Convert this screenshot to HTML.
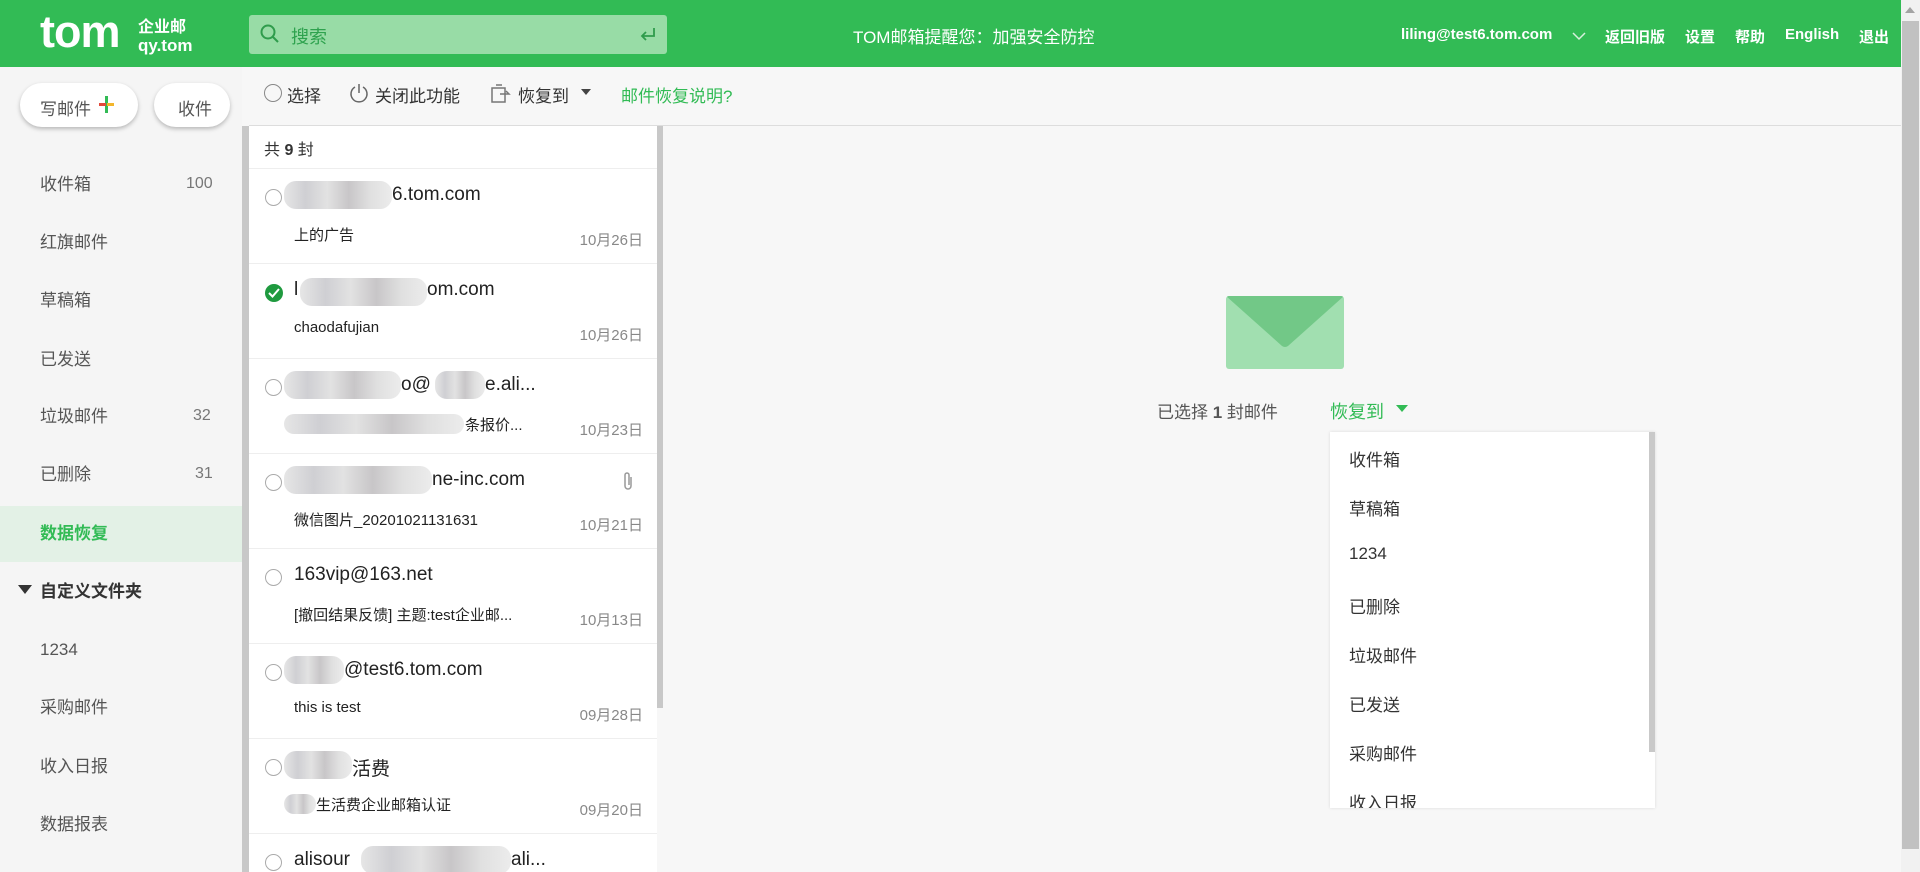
<!DOCTYPE html>
<html><head><meta charset="utf-8"><style>
*{margin:0;padding:0;box-sizing:border-box}
html,body{width:1920px;height:872px;overflow:hidden}
body{background:#f7f7f7;font-family:"Liberation Sans","Noto Sans CJK SC",sans-serif;color:#333}
#root{position:relative;width:1920px;height:872px;overflow:hidden}
.a{position:absolute;white-space:nowrap}
.hdr{left:0;top:0;width:1901px;height:67px;background:#32bb55}
.w{color:#fff}
.nav{left:40px;font-size:17px;color:#555;line-height:20px}
.cnt{font-size:16px;color:#777}
.item{left:249px;width:408px;height:95px;border-bottom:1px solid #eee;background:#fff}
.snd{font-size:19px;color:#222;left:45px;top:15px}
.sub{font-size:15px;color:#222;left:45px;top:55px}
.dt{font-size:15px;color:#888;right:14px;top:60px}
.rad{left:16px;top:20px;width:17px;height:17px;border:1.5px solid #aaa;border-radius:50%}
.blur{height:28px;border-radius:12px;background:linear-gradient(90deg,#e6e6e6,#cfcfd3 20%,#e2e2e2 40%,#c8c6c8 60%,#e0e0e0 80%,#ececec)}
.dd{font-size:17px;color:#333;left:1349px}
</style></head><body><div id="root">
<div class="a hdr"></div>
<div class="a w" style="left:40px;top:6px;font-size:45px;font-weight:bold;letter-spacing:-1px">tom</div>
<div class="a w" style="left:138px;top:13px;font-size:16px;font-weight:bold">企业邮</div>
<div class="a w" style="left:138px;top:36px;font-size:17px;font-weight:bold">qy.tom</div>
<div class="a" style="left:249px;top:15px;width:418px;height:39px;background:#98dca6;border-radius:3px"></div>
<svg class="a" style="left:259px;top:23px" width="22" height="22" viewBox="0 0 22 22"><circle cx="9" cy="9" r="6.5" fill="none" stroke="#2f9c4c" stroke-width="2"/><path d="M14 14l5 5" stroke="#2f9c4c" stroke-width="2"/></svg>
<div class="a" style="left:291px;top:23px;font-size:18px;color:#2ea24e">搜索</div>
<svg class="a" style="left:638px;top:25px" width="20" height="20" viewBox="0 0 20 20"><path d="M16 3v8H4M8 7l-4 4 4 4" fill="none" stroke="#2f9c4c" stroke-width="1.8"/></svg>
<div class="a w" style="left:853px;top:23px;font-size:17px">TOM邮箱提醒您：加强安全防控</div>
<div class="a w" style="left:1401px;top:26px;font-size:15px;font-weight:bold">liling@test6.tom.com</div>
<svg class="a" style="left:1572px;top:31px" width="14" height="10"><path d="M1 2l6 6 6-6" fill="none" stroke="#d8f0dd" stroke-width="1.5"/></svg>
<div class="a w" style="left:1605px;top:26px;font-size:15px;font-weight:bold">返回旧版</div>
<div class="a w" style="left:1685px;top:26px;font-size:15px;font-weight:bold">设置</div>
<div class="a w" style="left:1735px;top:26px;font-size:15px;font-weight:bold">帮助</div>
<div class="a w" style="left:1785px;top:26px;font-size:15px;font-weight:bold">English</div>
<div class="a w" style="left:1859px;top:26px;font-size:15px;font-weight:bold">退出</div>
<div class="a" style="left:1901px;top:0;width:19px;height:872px;background:#f1f1f1"></div>
<div class="a" style="left:1902px;top:21px;width:17px;height:828px;background:#c1c1c1"></div>
<svg class="a" style="left:1904px;top:6px" width="12" height="8"><path d="M1 7l5-6 5 6z" fill="#a3a3a3"/></svg>
<div class="a" style="left:0;top:67px;width:242px;height:805px;background:#f5f5f5"></div>
<div class="a" style="left:242px;top:126px;width:7px;height:746px;background:#c8c8c8"></div>
<div class="a" style="left:20px;top:83px;width:118px;height:44px;background:#fff;border-radius:22px;box-shadow:0 2px 4px rgba(0,0,0,.25)"></div>
<div class="a" style="left:40px;top:95px;font-size:17px;color:#555">写邮件</div>
<div class="a" style="left:105px;top:96px;width:3px;height:17px;background:#32bb55"></div>
<div class="a" style="left:99px;top:103px;width:7px;height:3px;background:#e24a3b"></div>
<div class="a" style="left:107px;top:103px;width:7px;height:3px;background:#f3b62b"></div>
<div class="a" style="left:154px;top:83px;width:76px;height:44px;background:#fff;border-radius:22px;box-shadow:0 2px 4px rgba(0,0,0,.25)"></div>
<div class="a" style="left:178px;top:95px;font-size:17px;color:#555">收件</div>
<div class="a nav" style="top:175px">收件箱</div><div class="a cnt" style="left:186px;top:175px">100</div>
<div class="a nav" style="top:233px">红旗邮件</div>
<div class="a nav" style="top:291px">草稿箱</div>
<div class="a nav" style="top:350px">已发送</div>
<div class="a nav" style="top:407px">垃圾邮件</div><div class="a cnt" style="left:193px;top:407px">32</div>
<div class="a nav" style="top:465px">已删除</div><div class="a cnt" style="left:195px;top:465px">31</div>
<div class="a" style="left:0;top:506px;width:242px;height:56px;background:#e3f1e6"></div>
<div class="a nav" style="top:524px;color:#32bb55;font-weight:bold">数据恢复</div>
<svg class="a" style="left:18px;top:585px" width="14" height="10"><path d="M0 0h14L7 9z" fill="#333"/></svg>
<div class="a nav" style="top:582px;color:#333;font-weight:bold">自定义文件夹</div>
<div class="a nav" style="top:640px">1234</div>
<div class="a nav" style="top:698px">采购邮件</div>
<div class="a nav" style="top:757px">收入日报</div>
<div class="a nav" style="top:815px">数据报表</div>
<div class="a" style="left:249px;top:125px;width:1652px;height:1px;background:#ddd"></div>
<div class="a" style="left:264px;top:84px;width:18px;height:18px;border:1.5px solid #888;border-radius:50%"></div>
<div class="a" style="left:287px;top:82px;font-size:17px;color:#333">选择</div>
<svg class="a" style="left:349px;top:82px" width="20" height="22"><path d="M6 5a8 8 0 1 0 8 0" fill="none" stroke="#666" stroke-width="1.5"/><path d="M10 2v9" stroke="#666" stroke-width="1.5"/></svg>
<div class="a" style="left:375px;top:82px;font-size:17px;color:#333">关闭此功能</div>
<svg class="a" style="left:490px;top:82px" width="22" height="22"><rect x="2" y="6" width="13" height="14" fill="none" stroke="#777" stroke-width="1.5"/><path d="M6 3h6M10 12h9l-3-3" fill="none" stroke="#777" stroke-width="1.5"/></svg>
<div class="a" style="left:518px;top:82px;font-size:17px;color:#333">恢复到</div>
<svg class="a" style="left:581px;top:89px" width="10" height="6"><path d="M0 0h10L5 6z" fill="#444"/></svg>
<div class="a" style="left:621px;top:82px;font-size:17px;color:#32bb55">邮件恢复说明?</div>
<div class="a" style="left:249px;top:126px;width:408px;height:746px;background:#fff"></div>
<div class="a" style="left:657px;top:126px;width:6px;height:582px;background:#c8c8c8"></div>
<div class="a" style="left:264px;top:136px;font-size:16px;color:#333">共 <b>9</b> 封</div>
<div class="a" style="left:249px;top:168px;width:408px;height:1px;background:#eee"></div>

<div class="a item" style="top:169px"><div class="a rad"></div><div class="a blur" style="left:35px;top:12px;width:108px"></div><div class="a snd" style="left:143px">6.tom.com</div><div class="a sub">上的广告</div><div class="a dt">10月26日</div></div>
<div class="a item" style="top:264px"><div class="a" style="left:16px;top:20px;width:18px;height:18px;border-radius:50%;background:#1f9a3f"></div><svg class="a" style="left:19px;top:24px" width="12" height="10"><path d="M1 5l3.5 3.5L11 1" fill="none" stroke="#fff" stroke-width="2"/></svg><div class="a snd">l</div><div class="a blur" style="left:51px;top:14px;width:127px"></div><div class="a snd" style="left:178px">om.com</div><div class="a sub">chaodafujian</div><div class="a dt">10月26日</div></div>
<div class="a item" style="top:359px"><div class="a rad"></div><div class="a blur" style="left:35px;top:12px;width:117px"></div><div class="a snd" style="left:152px">o@</div><div class="a blur" style="left:186px;top:12px;width:50px"></div><div class="a snd" style="left:236px">e.ali...</div><div class="a blur" style="left:35px;top:55px;width:180px;height:20px"></div><div class="a sub" style="left:216px">条报价...</div><div class="a dt">10月23日</div></div>
<div class="a item" style="top:454px"><div class="a rad"></div><div class="a blur" style="left:35px;top:12px;width:148px"></div><div class="a snd" style="left:183px">ne-inc.com</div><svg class="a" style="left:374px;top:17px" width="12" height="20"><path d="M8 6v9a3 3 0 0 1-6 0V4a2 2 0 0 1 4 0v10" fill="none" stroke="#999" stroke-width="1.5"/></svg><div class="a sub">微信图片_20201021131631</div><div class="a dt">10月21日</div></div>
<div class="a item" style="top:549px"><div class="a rad"></div><div class="a snd">163vip@163.net</div><div class="a sub">[撤回结果反馈] 主题:test企业邮...</div><div class="a dt">10月13日</div></div>
<div class="a item" style="top:644px"><div class="a rad"></div><div class="a blur" style="left:35px;top:12px;width:60px"></div><div class="a snd" style="left:95px">@test6.tom.com</div><div class="a sub">this is test</div><div class="a dt">09月28日</div></div>
<div class="a item" style="top:739px"><div class="a rad"></div><div class="a blur" style="left:35px;top:12px;width:68px"></div><div class="a snd" style="left:103px">活费</div><div class="a blur" style="left:35px;top:55px;width:32px;height:20px"></div><div class="a sub" style="left:67px">生活费企业邮箱认证</div><div class="a dt">09月20日</div></div>
<div class="a item" style="top:834px;height:38px;overflow:hidden;border-bottom:none"><div class="a rad"></div><div class="a snd">alisour</div><div class="a blur" style="left:112px;top:12px;width:150px"></div><div class="a snd" style="left:262px">ali...</div></div>
<div class="a" style="left:1226px;top:296px;width:118px;height:73px;background:#a1dfb0;border-radius:3px;overflow:hidden"><svg width="118" height="73"><path d="M0 0h118L62 50q-3 2-6 0z" fill="#72c887"/></svg></div>
<div class="a" style="left:1157px;top:398px;font-size:17px;color:#555">已选择 <b>1</b> 封邮件</div>
<div class="a" style="left:1330px;top:398px;font-size:18px;color:#32bb55">恢复到</div>
<svg class="a" style="left:1396px;top:405px" width="12" height="7"><path d="M0 0h12L6 7z" fill="#32bb55"/></svg>
<div class="a" style="left:1330px;top:432px;width:325px;height:376px;background:#fff;box-shadow:0 0 3px rgba(0,0,0,.12);overflow:hidden">
<div class="a" style="left:319px;top:0;width:6px;height:320px;background:#c9c9c9"></div>
</div>
<div class="a dd" style="top:446px">收件箱</div>
<div class="a dd" style="top:495px">草稿箱</div>
<div class="a dd" style="top:544px">1234</div>
<div class="a dd" style="top:593px">已删除</div>
<div class="a dd" style="top:642px">垃圾邮件</div>
<div class="a dd" style="top:691px">已发送</div>
<div class="a dd" style="top:740px">采购邮件</div>
<div class="a" style="left:1330px;top:789px;width:320px;height:19px;overflow:hidden"><div class="a dd" style="left:19px;top:0">收入日报</div></div>
</div></body></html>
